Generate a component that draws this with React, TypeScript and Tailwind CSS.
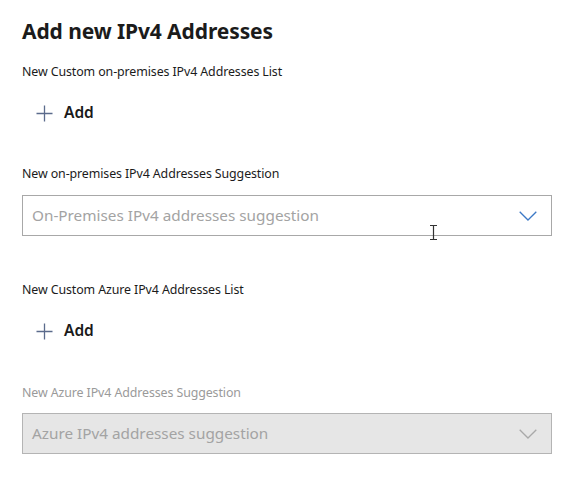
import React from 'react';

function Plus() {
  return (
    <svg width="17" height="17" viewBox="0 0 17 17" className="shrink-0">
      <path d="M8.5 0.5v16M0.5 8.5h16" stroke="#5b6b8c" strokeWidth="1.3" fill="none" />
    </svg>
  );
}

function Chevron({ color }: { color: string }) {
  return (
    <svg width="18" height="10" viewBox="0 0 18 10" className="shrink-0">
      <path d="M0.7 0.7L9 9l8.3-8.3" stroke={color} strokeWidth="1.3" fill="none" />
    </svg>
  );
}

function AddButton() {
  return (
    <button className="flex items-center gap-[11px] h-8 pl-[14px] text-[15.5px] font-semibold text-[#1b1b1b]">
      <Plus />
      <span>Add</span>
    </button>
  );
}

interface DropdownProps {
  placeholder: string;
  disabled?: boolean;
}

function Dropdown({ placeholder, disabled }: DropdownProps) {
  return (
    <div
      className={`flex items-center justify-between h-[41px] w-[530px] border pl-[9px] pr-[14px] ${
        disabled ? 'bg-[#e6e6e6] border-[#b4b4b4]' : 'bg-white border-[#a8a8a8]'
      }`}
    >
      <span className="text-[15.3px] text-[#a3a3a3]">{placeholder}</span>
      <Chevron color={disabled ? '#a9a9a9' : '#3d79c6'} />
    </div>
  );
}

export default function App() {
  return (
    <div
      className="relative w-[573px] h-[478px] bg-white pl-[22px] pt-[17px] text-[#1b1b1b]"
      style={{ fontFamily: '"Noto Sans", "Open Sans", sans-serif' }}
    >
      <h1 className="text-[21px] leading-7 font-bold tracking-[-0.1px]">Add new IPv4 Addresses</h1>

      <div className="mt-[19px] text-[12.4px] leading-4 tracking-[-0.1px]">New Custom on-premises IPv4 Addresses List</div>
      <div className="mt-[17px]">
        <AddButton />
      </div>

      <div className="mt-[37px] text-[12.4px] leading-4 tracking-[-0.1px]">New on-premises IPv4 Addresses Suggestion</div>
      <div className="mt-[13px]">
        <Dropdown placeholder="On-Premises IPv4 addresses suggestion" />
      </div>

      <div className="mt-[46px] text-[12.4px] leading-4 tracking-[-0.1px]">New Custom Azure IPv4 Addresses List</div>
      <div className="mt-[17px]">
        <AddButton />
      </div>

      <div className="mt-[38px] text-[12.4px] leading-4 tracking-[-0.1px] text-[#9a9a9a]">New Azure IPv4 Addresses Suggestion</div>
      <div className="mt-[12px]">
        <Dropdown placeholder="Azure IPv4 addresses suggestion" disabled />
      </div>

      {/* text cursor over the first dropdown */}
      <svg width="9" height="15" viewBox="0 0 9 15" className="absolute left-[429px] top-[225px]">
        <path d="M1 0.5h7M1 14.5h7M4.5 0.5v14" stroke="#333" strokeWidth="1.2" fill="none" />
      </svg>
    </div>
  );
}
